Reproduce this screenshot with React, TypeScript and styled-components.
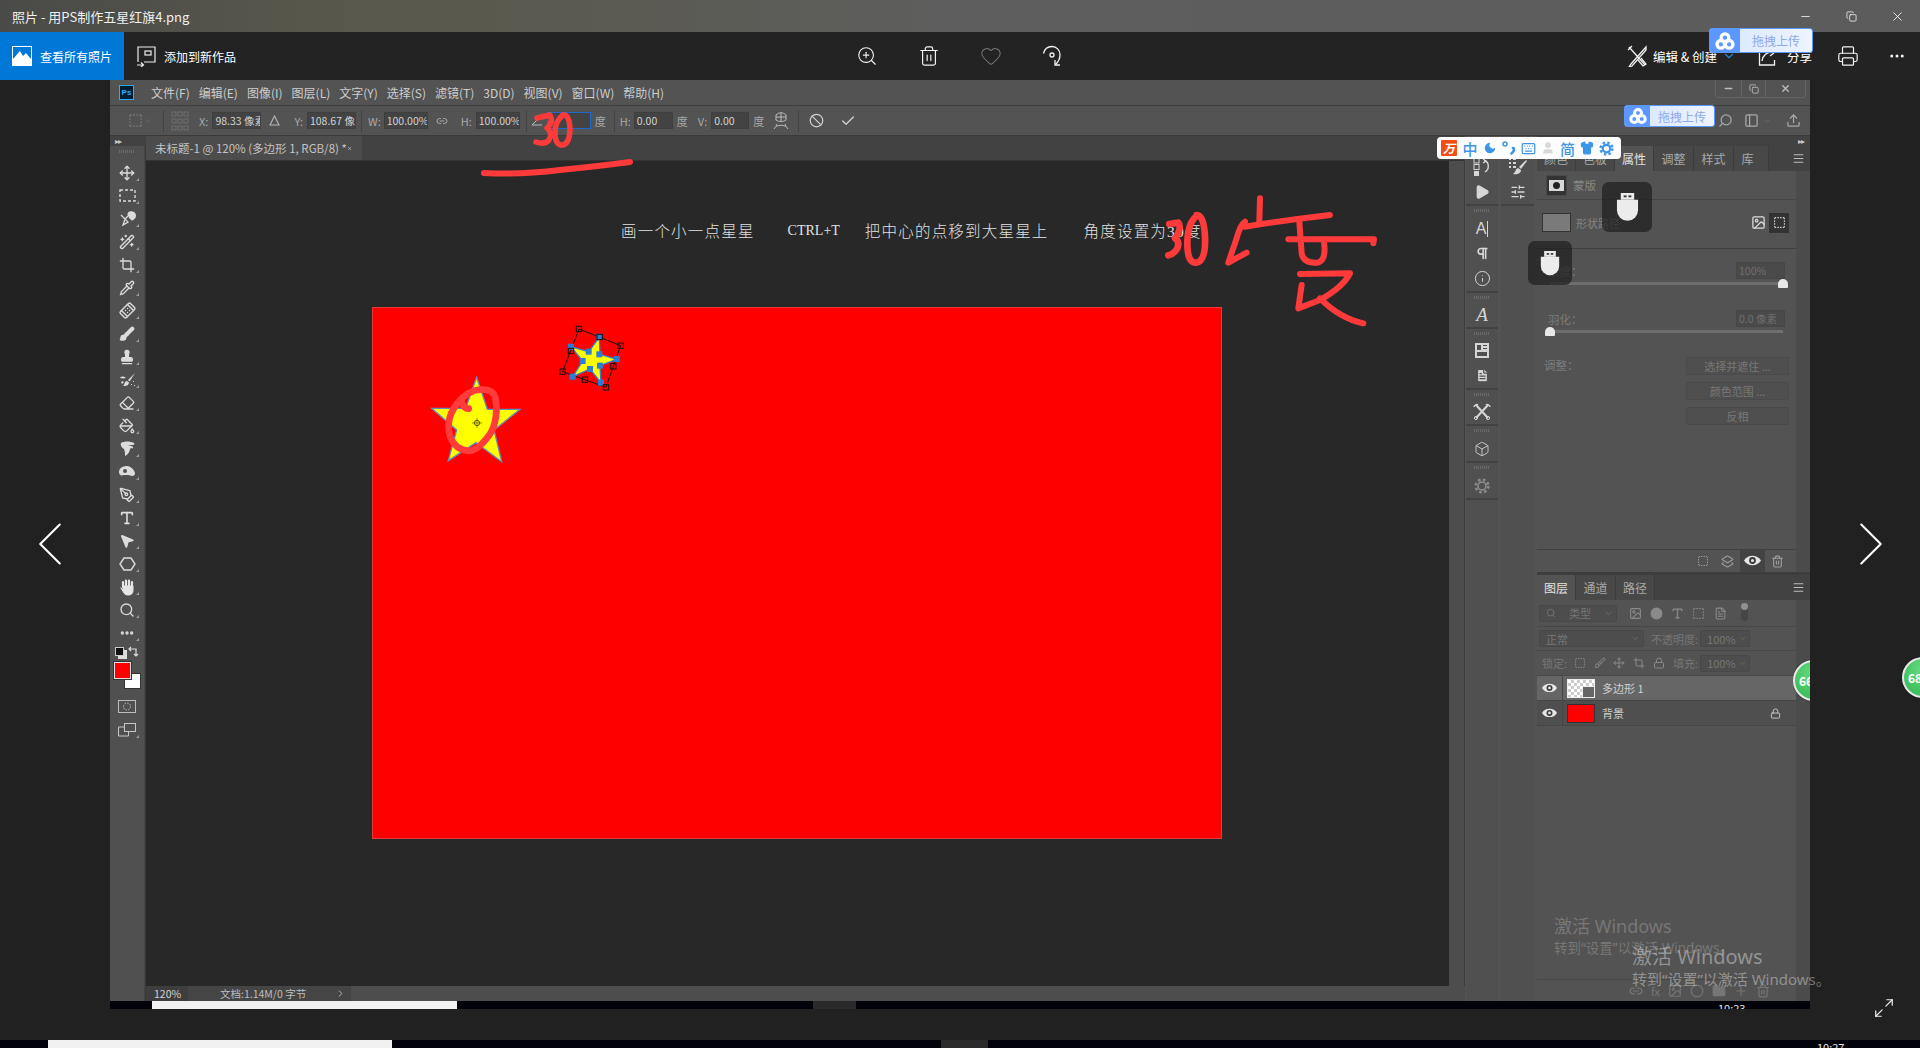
import { ReactNode } from "react";
import styled, { createGlobalStyle } from "styled-components";
import {
  Bandage,
  BoxSelect,
  Brush,
  Check,
  ChevronDown,
  ChevronLeft,
  ChevronRight,
  Crop,
  Eraser,
  FileText,
  Heart,
  Info,
  Keyboard,
  Layers2,
  Link2,
  Lock,
  Maximize2,
  Menu,
  Minus,
  MoreHorizontal,
  MousePointer2,
  Move,
  PaintBucket,
  PenTool,
  Pilcrow,
  Pipette,
  Play,
  Printer,
  Search,
  Shirt,
  SlidersHorizontal,
  Stamp,
  Trash2,
  Type,
  User,
  Wand2,
  X,
  ZoomIn,
  Ban,
  Box,
  Copy,
  Image,
  Folder,
  Plus,
  Upload,
  Circle,
  Moon,
  PanelLeft,
} from "lucide-react";

const CJK = `"Noto Sans CJK SC", "Liberation Sans", sans-serif`;

const GlobalStyle = createGlobalStyle`
  html, body {
    margin: 0;
    padding: 0;
    background: #212121;
    overflow: hidden;
  }
  * { box-sizing: border-box; }
`;

const Page = styled.div`
  position: relative;
  width: 1920px;
  height: 1048px;
  overflow: hidden;
  background: #212121;
  color: #fff;
  font-family: ${CJK};
  display: flex;
  flex-direction: column;
`;

/* ---------- Photos app chrome ---------- */

const TitleBar = styled.div`
  height: 32px;
  flex: none;
  display: flex;
  align-items: center;
  padding-left: 12px;
  font-size: 13px;
  color: #f0f0f0;
  background: linear-gradient(90deg, #4a4a48 0%, #57574c 16%, #5a5a50 28%, #5e5e5e 50%, #5c5c5c 100%);
`;

const WindowButtons = styled.div`
  margin-left: auto;
  display: flex;
  align-items: center;
`;

const WindowButton = styled.div`
  width: 46px;
  height: 32px;
  display: flex;
  align-items: center;
  justify-content: center;
  color: #fff;
`;

const CommandBar = styled.div`
  height: 48px;
  flex: none;
  background: #232323;
  display: flex;
  align-items: center;
  position: relative;
`;

const AllPhotos = styled.div`
  width: 124px;
  height: 48px;
  background: #0078d7;
  display: flex;
  align-items: center;
  gap: 8px;
  padding-left: 12px;
  font-size: 12px;
  flex: none;
`;

const AddToAlbum = styled.div`
  display: flex;
  align-items: center;
  gap: 8px;
  margin-left: 12px;
  font-size: 12px;
`;

const CommandCenter = styled.div`
  display: flex;
  align-items: center;
  gap: 40px;
  margin-left: 620px;
`;

const CommandRight = styled.div`
  display: flex;
  align-items: center;
  margin-left: auto;
  padding-right: 14px;
  font-size: 12.5px;
`;

const CommandLabel = styled.span<{ $ml?: number }>`
  margin-left: ${(p) => p.$ml ?? 6}px;
  white-space: nowrap;
`;

const CommandIcon = styled.span<{ $ml?: number }>`
  display: flex;
  margin-left: ${(p) => p.$ml ?? 0}px;
`;

const Stage = styled.div`
  height: 960px;
  flex: none;
  display: grid;
  grid-template-columns: 110px 1700px 110px;
`;

const SideColumn = styled.div<{ $right?: boolean }>`
  height: 928px;
  display: flex;
  align-items: center;
  justify-content: ${(p) => (p.$right ? "flex-end" : "flex-start")};
  padding: ${(p) => (p.$right ? "0 10px 0 0" : "0 0 0 11px")};
  color: #fff;
`;

const Photo = styled.div`
  height: 928px;
  display: flex;
  flex-direction: column;
`;

const BottomStrip = styled.div`
  height: 8px;
  flex: none;
  background: #02030a;
  display: flex;
  position: relative;
  overflow: hidden;
`;

const StripWhite = styled.div<{ $w: number; $ml: number }>`
  margin-left: ${(p) => p.$ml}px;
  width: ${(p) => p.$w}px;
  flex: none;
  background: #f1f1f1;
`;

const StripGrey = styled.div<{ $w: number; $ml: number }>`
  margin-left: ${(p) => p.$ml}px;
  width: ${(p) => p.$w}px;
  flex: none;
  background: #2a2a2a;
`;

const ClippedClock = styled.span<{ $ml: number }>`
  margin-left: ${(p) => p.$ml}px;
  font-size: 11px;
  line-height: 14px;
  color: #e8e8e8;
  white-space: nowrap;
`;

/* ---------- Photoshop: top bars ---------- */

const PsWindow = styled.div`
  height: 921px;
  flex: none;
  display: flex;
  flex-direction: column;
  background: #535353;
  color: #cfcfcf;
  font-size: 12px;
`;

const MenuBar = styled.div`
  height: 26px;
  flex: none;
  display: flex;
  align-items: center;
  background: #535353;
  border-bottom: 1px solid #3d3d3d;
  padding-left: 9px;
`;

const PsLogo = styled.div`
  width: 15px;
  height: 15px;
  background: #001e36;
  border: 1px solid #31a8ff;
  color: #31a8ff;
  font-size: 8px;
  font-weight: 700;
  line-height: 13px;
  text-align: center;
  font-family: "Liberation Sans", sans-serif;
  margin-right: 17px;
`;

const MenuItem = styled.span`
  margin-right: 9px;
  font-size: 12px;
  white-space: nowrap;
  color: #cdcdcd;
`;

const PsWindowControls = styled.div`
  margin-left: auto;
  margin-right: 4px;
  align-self: flex-start;
  height: 18px;
  display: flex;
  border: 1px solid #646464;
  border-top: 0;
  border-radius: 0 0 4px 4px;
`;

const PsControl = styled.div<{ $w: number }>`
  width: ${(p) => p.$w}px;
  display: flex;
  align-items: center;
  justify-content: center;
  color: #bdbdbd;
  border-left: 1px solid #646464;
  &:first-child { border-left: 0; }
`;

const OptionsBar = styled.div`
  height: 30px;
  flex: none;
  display: flex;
  align-items: center;
  background: #535353;
  border-bottom: 1px solid #3a3a3a;
  color: #b4b4b4;
  white-space: nowrap;
  overflow: hidden;
`;

const OptLabel = styled.span<{ $x?: number }>`
  margin-left: ${(p) => p.$x ?? 0}px;
  font-size: 11px;
  flex: none;
  color: #a8a8a8;
`;

const OptInput = styled.div<{ $w: number; $x?: number; $active?: boolean }>`
  width: ${(p) => p.$w}px;
  height: 17px;
  margin-left: ${(p) => p.$x ?? 2}px;
  flex: none;
  overflow: hidden;
  background: #434343;
  border: 1px solid ${(p) => (p.$active ? "#1f6ad0" : "#3f3f3f")};
  color: #d2d2d2;
  font-size: 10.5px;
  line-height: 15px;
  padding-left: 2px;
  white-space: nowrap;
`;

const OptIcon = styled.span<{ $x?: number }>`
  display: flex;
  flex: none;
  margin-left: ${(p) => p.$x ?? 0}px;
  color: #a9a9a9;
`;

const OptSep = styled.span<{ $x?: number }>`
  width: 1px;
  height: 22px;
  flex: none;
  background: #424242;
  margin-left: ${(p) => p.$x ?? 0}px;
`;

/* ---------- Photoshop: workspace ---------- */

const Workspace = styled.div`
  flex: 1;
  min-height: 0;
  display: flex;
`;

const ToolColumn = styled.div`
  width: 36px;
  flex: none;
  display: flex;
  flex-direction: column;
  background: #3a3a3a;
`;

const CollapseRow = styled.div`
  width: 100%;
  height: 10px;
  flex: none;
  background: #424242;
  color: #c8c8c8;
  font-size: 8px;
  line-height: 9px;
  padding-left: 5px;
  letter-spacing: -1px;
`;

const ToolRail = styled.div`
  width: 35px;
  flex: 1;
  background: #505050;
  border-right: 1px solid #454545;
  display: flex;
  flex-direction: column;
  align-items: center;
  padding-top: 4px;
`;

const Grip = styled.div`
  width: 16px;
  height: 3px;
  margin-bottom: 8px;
  flex: none;
  background: repeating-linear-gradient(90deg, #6a6a6a 0 1px, transparent 1px 2px);
`;

const ToolSlot = styled.div<{ $tick?: boolean }>`
  width: 34px;
  height: 23px;
  flex: none;
  position: relative;
  display: flex;
  align-items: center;
  justify-content: center;
  color: #dcdcdc;
  &::after {
    content: "";
    display: ${(p) => (p.$tick ? "block" : "none")};
    position: absolute;
    right: 5px;
    bottom: 3px;
    border-left: 3px solid transparent;
    border-bottom: 3px solid #9c9c9c;
  }
`;

const MiniSwatches = styled.div`
  width: 30px;
  height: 16px;
  display: flex;
  justify-content: space-between;
  align-items: center;
  padding: 0 3px 0 3px;
  color: #dcdcdc;
  margin-top: -1px;
`;

const MiniDefault = styled.span`
  width: 9px;
  height: 9px;
  background: #111;
  border: 1px solid #ccc;
  box-shadow: 3px 3px 0 #ddd;
`;

const ColorWell = styled.div`
  position: relative;
  width: 27px;
  height: 27px;
  margin: 3px 0 6px;
`;

const BackSwatch = styled.div`
  position: absolute;
  right: 0;
  bottom: 0;
  width: 17px;
  height: 16px;
  background: #fff;
  border: 1px solid #333;
`;

const FrontSwatch = styled.div`
  position: absolute;
  left: 0;
  top: 0;
  width: 17px;
  height: 17px;
  background: #f00;
  border: 1px solid #ddd;
  outline: 1px solid #333;
`;

const CenterColumn = styled.div`
  flex: 1;
  min-width: 0;
  display: flex;
  flex-direction: column;
`;

const TabBar = styled.div`
  height: 25px;
  flex: none;
  display: flex;
  background: #424242;
  border-bottom: 1px solid #333;
`;

const DocTab = styled.div`
  width: 216px;
  display: flex;
  align-items: center;
  justify-content: space-between;
  padding: 0 10px 0 9px;
  background: #4c4c4c;
  color: #c4c4c4;
  font-size: 11.5px;
  white-space: nowrap;
`;

const DocArea = styled.div`
  flex: 1;
  min-height: 0;
  display: flex;
`;

const Canvas = styled.div`
  flex: 1;
  min-width: 0;
  background: #282828;
  display: flex;
  flex-direction: column;
`;

const CanvasNote = styled.div`
  margin: 57px 0 0 475px;
  height: 24px;
  display: flex;
  align-items: center;
  white-space: nowrap;
  font-size: 15.5px;
  letter-spacing: 1.2px;
  color: #e2e2e2;
  font-weight: 300;
  font-family: "Liberation Serif", "Noto Sans CJK SC", serif;
`;

const NotePart = styled.span<{ $x?: number }>`
  margin-left: ${(p) => p.$x ?? 0}px;
`;

const NoteKeys = styled.span`
  margin: 2px 0 0 33px;
  font-size: 14px;
  letter-spacing: 0;
`;

const Flag = styled.div`
  position: relative;
  width: 850px;
  height: 532px;
  margin: 65px 0 0 226px;
  background: #f00;
  box-shadow: inset 0 0 0 1px #e23a3a;
  flex: none;
`;

const FlagArt = styled.svg`
  position: absolute;
  left: 0;
  top: 0;
`;

const DocScroll = styled.div`
  width: 16px;
  flex: none;
  background: #4d4d4d;
  border-right: 1px solid #3d3d3d;
`;

const StatusBar = styled.div`
  height: 15px;
  flex: none;
  display: flex;
  background: #4d4d4d;
  font-size: 10.5px;
  line-height: 15px;
  color: #bdbdbd;
`;

const ZoomBox = styled.div`
  width: 42px;
  background: #3e3e3e;
  padding-left: 8px;
  color: #d4d4d4;
`;

const DocInfo = styled.div`
  width: 163px;
  background: #454545;
  padding: 0 5px 0 32px;
  display: flex;
  justify-content: space-between;
  align-items: center;
`;

const DockColumn = styled.div<{ $ml?: number; $w: number }>`
  width: ${(p) => p.$w}px;
  margin-left: ${(p) => p.$ml ?? 0}px;
  flex: none;
  display: flex;
  flex-direction: column;
  padding-top: 10px;
`;

const DockGroup = styled.div<{ $h: number }>`
  height: ${(p) => p.$h}px;
  flex: none;
  background: #505050;
  border-bottom: 2px solid #424242;
  display: flex;
  flex-direction: column;
  align-items: center;
  justify-content: flex-end;
  position: relative;
  &::before {
    content: "";
    position: absolute;
    top: 3px;
    left: 8px;
    right: 8px;
    height: 3px;
    background: repeating-linear-gradient(90deg, #6a6a6a 0 1px, transparent 1px 2px);
  }
`;

const DockFill = styled.div`
  flex: 1;
  background: #505050;
`;

const DockIcon = styled.div`
  height: 25px;
  display: flex;
  align-items: center;
  justify-content: center;
  color: #d6d6d6;
  flex: none;
`;

const DockScript = styled.span`
  font-family: "Liberation Serif", serif;
  font-style: italic;
  font-size: 19px;
  color: #d6d6d6;
`;

const DockLetter = styled.span`
  font-family: "Liberation Sans", sans-serif;
  font-size: 16px;
  color: #d6d6d6;
  border-right: 1px solid #d6d6d6;
  padding-right: 1px;
  line-height: 16px;
`;

const PanelColumn = styled.div`
  width: 273px;
  margin-left: 3px;
  flex: none;
  display: flex;
  flex-direction: column;
  background: #3d3d3d;
`;

const PanelTop = styled.div`
  height: 10px;
  flex: none;
  background: #424242;
  color: #c8c8c8;
  font-size: 8px;
  line-height: 9px;
  text-align: right;
  padding-right: 6px;
  letter-spacing: -1px;
`;

const PanelTabs = styled.div`
  height: 25px;
  flex: none;
  display: flex;
  align-items: stretch;
  background: #424242;
  position: relative;
`;

const PanelTab = styled.div<{ $w: number; $active?: boolean; $pr?: number }>`
  width: ${(p) => p.$w}px;
  flex: none;
  display: flex;
  align-items: center;
  justify-content: center;
  padding-right: ${(p) => p.$pr ?? 0}px;
  font-size: 12px;
  color: ${(p) => (p.$active ? "#e2e2e2" : "#a8a8a8")};
  background: ${(p) => (p.$active ? "#535353" : "#484848")};
  border-right: 1px solid #3c3c3c;
`;

const PanelMenu = styled.div`
  margin-left: auto;
  width: 24px;
  display: flex;
  align-items: center;
  justify-content: center;
  color: #bdbdbd;
`;

const Properties = styled.div`
  height: 436px;
  flex: none;
  display: flex;
  flex-direction: column;
`;

const PanelBody = styled.div`
  flex: 1;
  min-height: 0;
  display: flex;
  background: #4b4b4b;
`;

const PanelInner = styled.div`
  width: 259px;
  flex: none;
  background: #535353;
  display: flex;
  flex-direction: column;
`;

const MaskRow = styled.div`
  height: 29px;
  flex: none;
  display: flex;
  align-items: center;
  gap: 6px;
  padding-left: 9px;
  border-bottom: 1px solid #454545;
  color: #888;
  font-size: 11.5px;
`;

const MaskIcon = styled.div`
  width: 21px;
  height: 21px;
  background: #333;
  border: 1px solid #484848;
  display: flex;
  align-items: center;
  justify-content: center;
`;

const MaskWhite = styled.div`
  width: 15px;
  height: 11px;
  background: #d8d8d8;
  display: flex;
  align-items: center;
  justify-content: center;
  &::after {
    content: "";
    width: 7px;
    height: 7px;
    border-radius: 50%;
    background: #222;
  }
`;

const ShapeRow = styled.div`
  height: 49px;
  flex: none;
  display: flex;
  align-items: center;
  gap: 5px;
  padding: 0 7px 3px 5px;
  border-bottom: 1px solid #3f3f3f;
  color: #858585;
  font-size: 11px;
`;

const ShapeThumb = styled.div`
  width: 29px;
  height: 19px;
  background: #7a7a7a;
  border: 1px solid #333;
`;

const ShapeTools = styled.div`
  margin-left: auto;
  display: flex;
  align-items: center;
  gap: 3px;
  color: #ddd;
`;

const ShapeToolBox = styled.div`
  width: 20px;
  height: 20px;
  background: #333;
  display: flex;
  align-items: center;
  justify-content: center;
`;

const SliderBlock = styled.div<{ $mt: number }>`
  margin: ${(p) => p.$mt}px 11px 0 11px;
  flex: none;
`;

const SliderHead = styled.div`
  display: flex;
  align-items: center;
  justify-content: space-between;
  height: 17px;
  color: #7c7c7c;
  font-size: 11.5px;
`;

const ValueBox = styled.div`
  width: 49px;
  height: 17px;
  background: #4a4a4a;
  border: 1px solid #464646;
  color: #707070;
  font-size: 10.5px;
  line-height: 15px;
  padding-left: 2px;
  overflow: hidden;
  white-space: nowrap;
`;

const SliderTrack = styled.div<{ $at: number }>`
  position: relative;
  height: 3px;
  margin: 3px 2px 0 2px;
  background: #6e6e6e;
  &::after {
    content: "";
    position: absolute;
    left: ${(p) => p.$at}%;
    top: -3px;
    margin-left: -5px;
    width: 10px;
    height: 9px;
    background: #e8e8e8;
    border-radius: 5px 5px 1px 1px;
  }
`;

const AdjustRow = styled.div`
  margin: 24px 7px 0 7px;
  display: flex;
  justify-content: space-between;
  flex: none;
  color: #7c7c7c;
  font-size: 11.5px;
`;

const AdjustButtons = styled.div`
  display: flex;
  flex-direction: column;
  gap: 7px;
`;

const AdjustButton = styled.div`
  width: 103px;
  height: 18px;
  border: 1px solid #4a4a4a;
  border-radius: 2px;
  background: #4f4f4f;
  color: #787878;
  font-size: 11px;
  line-height: 16px;
  text-align: center;
`;

const ActionBar = styled.div`
  height: 23px;
  flex: none;
  margin-top: auto;
  display: flex;
  align-items: stretch;
  justify-content: flex-end;
  padding-right: 6px;
  border-top: 1px solid #414141;
  background: #535353;
`;

const ActionItem = styled.div<{ $active?: boolean; $dim?: boolean }>`
  width: 25px;
  display: flex;
  align-items: center;
  justify-content: center;
  color: ${(p) => (p.$dim ? "#a0a0a0" : "#dedede")};
  background: ${(p) => (p.$active ? "#434343" : "transparent")};
`;

const PanelGap = styled.div`
  height: 3px;
  flex: none;
`;

const Layers = styled.div`
  flex: 1;
  min-height: 0;
  display: flex;
  flex-direction: column;
`;

const FilterRow = styled.div<{ $h: number }>`
  height: ${(p) => p.$h}px;
  flex: none;
  display: flex;
  align-items: center;
  padding-left: 2px;
  color: #8a8a8a;
  border-bottom: 1px solid #484848;
`;

const FieldBox = styled.div<{ $w: number; $x?: number }>`
  width: ${(p) => p.$w}px;
  height: 17px;
  margin-left: ${(p) => p.$x ?? 0}px;
  flex: none;
  display: flex;
  align-items: center;
  justify-content: space-between;
  gap: 3px;
  padding: 0 3px 0 6px;
  background: #4d4d4d;
  border: 1px solid #484848;
  border-radius: 2px;
  color: #767676;
  font-size: 11px;
  white-space: nowrap;
`;

const FilterIcon = styled.span<{ $x: number }>`
  display: flex;
  margin-left: ${(p) => p.$x}px;
  flex: none;
`;

const FilterToggle = styled.span`
  width: 7px;
  height: 15px;
  margin-left: 14px;
  border-radius: 4px;
  background: #464646;
  position: relative;
  &::after {
    content: "";
    position: absolute;
    left: 0;
    top: -3px;
    width: 7px;
    height: 7px;
    border-radius: 50%;
    background: #909090;
  }
`;

const DimLabel = styled.span<{ $x?: number }>`
  margin-left: ${(p) => p.$x ?? 0}px;
  font-size: 11px;
  color: #767676;
  flex: none;
`;

const LayerRow = styled.div<{ $selected?: boolean }>`
  height: 25px;
  flex: none;
  display: flex;
  align-items: center;
  background: ${(p) => (p.$selected ? "#666" : "#4f4f4f")};
  border-bottom: 1px solid #464646;
  color: #d0d0d0;
  font-size: 11px;
`;

const EyeCell = styled.div`
  width: 26px;
  height: 100%;
  flex: none;
  display: flex;
  align-items: center;
  justify-content: center;
  border-right: 1px solid #464646;
`;

const LayerThumb = styled.div<{ $red?: boolean }>`
  width: 28px;
  height: 19px;
  margin: 0 7px 0 4px;
  flex: none;
  border: 1px solid ${(p) => (p.$red ? "#333" : "#eee")};
  background-color: ${(p) => (p.$red ? "#f00" : "#fff")};
  background-image: ${(p) =>
    p.$red
      ? "none"
      : "linear-gradient(45deg, #ccc 25%, transparent 25%, transparent 75%, #ccc 75%), linear-gradient(45deg, #ccc 25%, transparent 25%, transparent 75%, #ccc 75%)"};
  background-size: 6px 6px;
  background-position: 0 0, 3px 3px;
  position: relative;
`;

const ThumbBadge = styled.div`
  position: absolute;
  right: -1px;
  bottom: -1px;
  width: 13px;
  height: 12px;
  background: #666;
  border: 1px solid #eee;
`;

const LayerLock = styled.span`
  margin-left: auto;
  margin-right: 15px;
  display: flex;
  color: #ccc;
`;

const LayersFooter = styled.div`
  height: 22px;
  flex: none;
  margin-top: auto;
  border-top: 1px solid #474747;
  display: flex;
  align-items: center;
  gap: 8px;
  padding-left: 92px;
  color: #767676;
`;

/* ---------- things lying over the photo ---------- */

const UploadBadge = styled.div<{ $x: number; $y: number; $w: number; $h: number }>`
  position: absolute;
  left: ${(p) => p.$x}px;
  top: ${(p) => p.$y}px;
  width: ${(p) => p.$w}px;
  height: ${(p) => p.$h}px;
  display: flex;
  border: 1px solid #5b97ff;
  border-radius: 3px;
  overflow: hidden;
  background: linear-gradient(90deg, #d6e5ff, #eef4ff);
`;

const UploadLogo = styled.div<{ $w: number }>`
  width: ${(p) => p.$w}px;
  flex: none;
  background: #5b97ff;
  display: flex;
  align-items: center;
  justify-content: center;
`;

const UploadText = styled.div`
  flex: 1;
  display: flex;
  align-items: center;
  justify-content: center;
  font-size: 12px;
  color: #8ea9ee;
  white-space: nowrap;
`;

const ImeBar = styled.div`
  position: absolute;
  left: 1437px;
  top: 137px;
  width: 184px;
  height: 22px;
  background: #fdfdfd;
  border-radius: 4px;
  display: flex;
  align-items: center;
  gap: 3.5px;
  padding-left: 4px;
  color: #3d95e8;
`;

const ImeLogo = styled.div`
  width: 16px;
  height: 16px;
  margin-right: 1.5px;
  background: #f04e14;
  border-radius: 1px;
  display: flex;
  align-items: center;
  justify-content: center;
  color: #fff;
  font-size: 12px;
  font-weight: 700;
  line-height: 1;
  font-style: italic;
  flex: none;
`;

const ImeItem = styled.div`
  width: 16px;
  height: 16px;
  flex: none;
  display: flex;
  align-items: center;
  justify-content: center;
  font-size: 15px;
  line-height: 1;
  font-weight: 500;
`;

const UsbTile = styled.div<{ $x: number; $y: number; $s: number }>`
  position: absolute;
  left: ${(p) => p.$x}px;
  top: ${(p) => p.$y}px;
  width: ${(p) => p.$s}px;
  height: ${(p) => p.$s}px;
  border-radius: 7px;
  background: rgba(30, 30, 30, 0.72);
  display: flex;
  align-items: center;
  justify-content: center;
`;

const SpeedBall = styled.div<{ $y: number }>`
  position: absolute;
  left: 0;
  top: ${(p) => p.$y}px;
  width: 41px;
  height: 41px;
  border-radius: 50%;
  border: 2px solid #e8e8e8;
  background: radial-gradient(circle at 50% 30%, #66dc80, #3fc05f 70%);
  color: #fff;
  font-size: 12px;
  font-weight: 700;
  line-height: 37px;
  padding-left: 4px;
  box-shadow: 0 0 2px rgba(0, 0, 0, 0.6);
`;

const BallClip = styled.div<{ $x: number; $w: number }>`
  position: absolute;
  left: ${(p) => p.$x}px;
  top: 650px;
  width: ${(p) => p.$w}px;
  height: 60px;
  overflow: hidden;
`;

const Activation = styled.div<{ $x: number; $y: number; $alpha: number; $big: number; $small: number }>`
  position: absolute;
  left: ${(p) => p.$x}px;
  top: ${(p) => p.$y}px;
  color: rgba(255, 255, 255, ${(p) => p.$alpha});
  font-size: ${(p) => p.$big}px;
  line-height: 26px;
  white-space: nowrap;
  font-family: "Noto Sans", ${CJK};
  small {
    display: block;
    font-size: ${(p) => p.$small}px;
    line-height: 18px;
  }
`;

const Annotations = styled.svg`
  position: absolute;
  left: 0;
  top: 0;
  pointer-events: none;
`;

const ExpandButton = styled.div`
  position: absolute;
  left: 1873px;
  top: 997px;
  color: #eee;
`;

/* ---------- small drawings ---------- */

function BaiduMark({ size }: { size: number }) {
  return (
    <svg width={size} height={size} viewBox="0 0 24 24" fill="none" stroke="#fff" strokeWidth="4">
      <circle cx="12" cy="8" r="4.6" />
      <circle cx="7" cy="16" r="4.6" />
      <circle cx="17" cy="16" r="4.6" />
    </svg>
  );
}

function UsbIcon({ w }: { w: number }) {
  return (
    <svg width={w} height={w * 1.25} viewBox="0 0 24 30" fill="#ececec">
      <path d="M5 0h14v7H5z" />
      <path d="M1 7h22v11a11 11 0 0 1-22 0z" />
      <rect x="8" y="2.5" width="3" height="2" fill="#333" />
      <rect x="13" y="2.5" width="3" height="2" fill="#333" />
    </svg>
  );
}

function RotateIcon() {
  return (
    <svg width="20" height="22" viewBox="0 0 20 22" fill="none" stroke="#f2f2f2" strokeWidth="1.3">
      <path d="M1.5 8.5C2.5 4 6 1.5 10 1.5c4.5 0 8 3.6 8 8.2 0 4-1.6 7-4.5 9.8" />
      <path d="M13 15v5h5" />
      <circle cx="10" cy="10" r="2" />
    </svg>
  );
}

function PhotosIcon() {
  return (
    <svg width="20" height="20" viewBox="0 0 20 20">
      <rect width="20" height="20" fill="#fff" />
      <path d="M1 1h18v12l-5-6-3 3-3-5-7 8z" fill="#0078d7" />
    </svg>
  );
}

function AlbumIcon() {
  return (
    <svg width="20" height="22" viewBox="0 0 20 22" fill="none" stroke="#eee" strokeWidth="1.2">
      <path d="M2 17V2h17v15H8" />
      <rect x="9" y="6" width="6" height="4" />
      <path d="M1 20h6M5 17.5 7.5 20 5 22" />
    </svg>
  );
}

function EditCreateIcon() {
  return (
    <svg width="20" height="22" viewBox="0 0 20 22" fill="none" stroke="#f2f2f2" strokeWidth="1.3">
      <path d="M2 2 18 20M5 1 1 5M19 2 4 19l-2 3 3-1L19 5z" />
      <path d="M11 15l5 6 3-2-5-6" />
    </svg>
  );
}

function ShareIcon() {
  return (
    <svg width="20" height="20" viewBox="0 0 20 20" fill="none" stroke="#f2f2f2" strokeWidth="1.3">
      <path d="M1.5 4v15h15v-5" />
      <path d="M4 15c1-6 5-9 11-9M12 1.5l5 4.5-5 4" />
    </svg>
  );
}

function WarpIcon() {
  return (
    <svg width="16" height="20" viewBox="0 0 16 20" fill="none" stroke="#bdbdbd" strokeWidth="1">
      <path d="M3 4c3-3 7-3 10 0v5c-3 2-7 2-10 0zM8 2v9M3 6h10" />
      <path d="M1 18c2-5 12-5 14 0M4 13l-1 2M12 13l1 2" />
    </svg>
  );
}

function GridIcon() {
  return (
    <svg width="18" height="20" viewBox="0 0 18 20" fill="none" stroke="#6e6e6e" strokeWidth="1">
      {[1, 7, 13].map((x) =>
        [1, 8, 15].map((y) => <rect key={`${x}-${y}`} x={x} y={y} width="4" height="4" />)
      )}
    </svg>
  );
}

function DeltaIcon() {
  return (
    <svg width="11" height="11" viewBox="0 0 11 11" fill="none" stroke="#b8b8b8" strokeWidth="1.1">
      <path d="M5.5 1 10 10H1z" />
    </svg>
  );
}

function AngleIcon() {
  return (
    <svg width="12" height="10" viewBox="0 0 12 10" fill="none" stroke="#b8b8b8" strokeWidth="1">
      <path d="M1 9h10M1 9l8-8" />
    </svg>
  );
}

function HistoryIcon() {
  return (
    <svg width="20" height="20" viewBox="0 0 20 20" fill="#d6d6d6">
      <rect x="2" y="1" width="5" height="5" fill="none" stroke="#d6d6d6" />
      <rect x="2" y="7.5" width="5" height="5" fill="none" stroke="#d6d6d6" />
      <rect x="2" y="14" width="5" height="5" />
      <path d="M11 2l3 2-3 2M12 4c5 0 6 8 1 11" fill="none" stroke="#d6d6d6" strokeWidth="1.4" />
    </svg>
  );
}

function BrushPresetIcon() {
  return (
    <svg width="20" height="20" viewBox="0 0 20 20" fill="#d6d6d6">
      <path d="M1 1h2v2H1zM5 1h3v2H5zM1 5h2v2H1zM5 5h3v2H5zM1 9h2v2H1zM5 9h3v2H5z" />
      <path d="M18 3 11 10l2 2 6-8zM10 11c-3 1-2 4-5 6 3 1 8 0 8-4z" />
    </svg>
  );
}

function EyeIcon({ size = 17 }: { size?: number }) {
  return (
    <svg width={size} height={size * 0.65} viewBox="0 0 20 13">
      <path d="M0 6.5C4-1 16-1 20 6.5 16 14 4 14 0 6.5z" fill="#e6e6e6" />
      <circle cx="10" cy="6.5" r="4" fill="#3c3c3c" />
      <circle cx="10" cy="6.5" r="1.8" fill="#e6e6e6" />
    </svg>
  );
}

function MarqueeIcon() {
  return (
    <svg width="17" height="13" viewBox="0 0 17 13" fill="none" stroke="#dcdcdc" strokeWidth="1.4" strokeDasharray="3 2">
      <rect x="1" y="1" width="15" height="11" />
    </svg>
  );
}

function LassoIcon() {
  return (
    <svg width="17" height="17" viewBox="0 0 17 17" fill="none" stroke="#dcdcdc" strokeWidth="1.3">
      <path d="M2 5l7 7-5 3 2-6 4-4" />
      <path d="M9 5c0-4 6-4 7-1 1 3-1 5-3 6l-3-3" fill="#dcdcdc" />
    </svg>
  );
}

function HistoryBrushIcon() {
  return (
    <svg width="17" height="16" viewBox="0 0 17 16" fill="#dcdcdc">
      <path d="M16 1 9 8l1.6 1.6zM8 9c-3 .5-2 3.5-4 5 3 .5 6-.5 6-3.4z" />
      <path d="M1 6c1-2 4-2 6 0-2 .6-4 .6-6 0zM2 10c1-1 2-1 3 0l-2 2z" />
      <path d="M12 12h1v1h-1zM14 9h1v1h-1zM15 13h1v1h-1z" />
    </svg>
  );
}

function SmudgeIcon() {
  return (
    <svg width="17" height="17" viewBox="0 0 17 17" fill="#dcdcdc">
      <path d="M2 3c3-2 9-2 13 0 1 1 0 2-1 2H9c2 .5 4 1 5 2 .5 1-.5 2-2 1l-1 1c0 2-2 6-5 7 0-2 0-5-1-7C3 8 1 5 2 3z" />
    </svg>
  );
}

function DodgeIcon() {
  return (
    <svg width="18" height="14" viewBox="0 0 18 14" fill="#dcdcdc">
      <path d="M1 7c0-4 4-6 8-6 3 0 7 3 8 7 0 2-1 3-3 3-1 0-2-1-4-1H6C3 11 1 10 1 7z" />
      <circle cx="7" cy="6" r="2" fill="#505050" />
    </svg>
  );
}

function HandIcon() {
  return (
    <svg width="17" height="18" viewBox="0 0 17 18" fill="none" stroke="#e6e6e6" strokeLinecap="round" strokeWidth="2.2">
      <path d="M4 9V4M7 8V2.5M10 8V2.5M13 9V4" />
      <path d="M2 10l3 5c1 1.5 2 2 4 2 3 0 5-1 5-5V8H4v4z" fill="#e6e6e6" strokeWidth="1" />
    </svg>
  );
}

function ShapeHexIcon() {
  return (
    <svg width="17" height="14" viewBox="0 0 17 14" fill="none" stroke="#dcdcdc" strokeWidth="1.4">
      <path d="M5 1h7l4 6-4 6H5L1 7z" />
    </svg>
  );
}

function QuickMaskIcon() {
  return (
    <svg width="18" height="13" viewBox="0 0 18 13" fill="none" stroke="#bdbdbd">
      <rect x="0.5" y="0.5" width="17" height="12" />
      <circle cx="9" cy="6.5" r="3.5" strokeDasharray="1.5 1.2" />
    </svg>
  );
}

function ScreenModeIcon() {
  return (
    <svg width="18" height="14" viewBox="0 0 18 14" fill="none" stroke="#c6c6c6">
      <rect x="6.5" y="0.5" width="11" height="8" />
      <path d="M6 4H0.5v9h10V9" />
    </svg>
  );
}

function SwapIcon() {
  return (
    <svg width="11" height="11" viewBox="0 0 11 11" fill="none" stroke="#dcdcdc" strokeWidth="1.2">
      <path d="M1 3h7v7M3 1 1 3l2 2M6 8l2 2 2-2" />
    </svg>
  );
}

function ToolsCrossIcon() {
  return (
    <svg width="18" height="18" viewBox="0 0 18 18" fill="none" stroke="#d6d6d6" strokeWidth="2">
      <path d="M3 2l12 13M15 2 3 15" />
      <circle cx="15" cy="15" r="1.6" strokeWidth="1" />
      <circle cx="3" cy="15" r="1.6" strokeWidth="1" />
      <path d="M1 4c0-2 3-3 4-2M17 4c0-2-3-3-4-2" strokeWidth="1.4" />
    </svg>
  );
}

function RingGearIcon({ size, color, thick }: { size: number; color: string; thick: number }) {
  return (
    <svg width={size} height={size} viewBox="0 0 20 20" fill="none" stroke={color}>
      <circle cx="10" cy="10" r="5" strokeWidth={thick} />
      <circle cx="10" cy="10" r="8" strokeWidth="3" strokeDasharray="3.3 3" />
    </svg>
  );
}

function PunctuationIcon() {
  return (
    <svg width="16" height="16" viewBox="0 0 16 16" fill="none" stroke="#3d95e8" strokeWidth="1.5">
      <circle cx="4" cy="4" r="2" />
      <path d="M12 8c1.6 0 1.6 3-1.5 5.5" strokeWidth="2.6" strokeLinecap="round" />
    </svg>
  );
}

function PanelFormIcon() {
  return (
    <svg width="16" height="17" viewBox="0 0 16 17" fill="#d6d6d6">
      <path d="M1 1h14v15H1z" />
      <path d="M3 3h4v5H3zM9 3h4v1H9zM9 6h4v1H9zM3 10h10v4H3z" fill="#505050" />
    </svg>
  );
}

function StarArt() {
  const handles = [
    [598, 110], [650, 177], [603, 248], [518, 230], [513, 140],
    [566, 155], [598, 163], [600, 197], [570, 207], [548, 183],
  ];
  const boxHandles = [
    [537, 87], [662, 137], [618, 262], [488, 215], [513, 153], [640, 199], [555, 239], [599, 111],
  ];
  return (
    <FlagArt width="850" height="532" viewBox="0 0 850 532">
      <g transform="translate(28 -7) scale(0.33333)">
        <polygon
          points="230,232 262,328 360,328 282,390 305,485 228,428 145,482 170,390 95,325 197,325"
          fill="#ffff00"
          stroke="#5f8fc0"
          strokeWidth="4"
        />
        <path
          d="M206 326C192 326 186 315 185 302M146 385C143 340 172 302 205 280C232 264 278 262 286 292C294 330 288 375 268 405C248 432 222 458 200 452C168 448 148 420 146 385"
          fill="none"
          stroke="#ff3b3b"
          strokeWidth="20"
          strokeLinecap="round"
        />
        <circle cx="231" cy="369" r="8" fill="none" stroke="#5a5a00" strokeWidth="3" />
        <path d="M216 369h30M231 354v30" stroke="#5a5a00" strokeWidth="2" />
        <polygon
          points="598,112 600,163 650,178 600,197 603,248 570,207 518,230 548,183 513,140 566,155"
          fill="#ffff00"
          stroke="#2f80d8"
          strokeWidth="4"
        />
        <polygon points="537,87 662,137 618,262 488,215" fill="none" stroke="#111" strokeWidth="3" />
        {handles.map(([x, y]) => (
          <rect key={`${x}-${y}`} x={x - 9} y={y - 9} width="18" height="18" fill="#2a7fd4" />
        ))}
        {boxHandles.map(([x, y]) => (
          <rect
            key={`b${x}-${y}`}
            x={x - 8}
            y={y - 8}
            width="16"
            height="16"
            fill="none"
            stroke="#111"
            strokeWidth="3"
          />
        ))}
      </g>
    </FlagArt>
  );
}

function InkStrokes() {
  const ink = { fill: "none", stroke: "#ff3a3a", strokeLinecap: "round", strokeLinejoin: "round" } as const;
  return (
    <Annotations width="1920" height="1048" viewBox="0 0 1920 1048">
      <g {...ink} strokeWidth="5.5">
        <path d="M537 118L550 115Q554 122 547 128Q553 133 549 140Q545 145 536 142" />
        <path d="M563 115Q554 122 555 135Q556 146 563 145Q570 143 570 128Q569 114 563 115" />
        <path d="M484 173Q520 175 560 170Q600 166 630 162" strokeWidth="6" />
      </g>
      <g {...ink} strokeWidth="18" transform="translate(1100 180) scale(0.33333)">
        <path d="M208 132L235 128Q245 140 232 165L225 175Q240 185 232 205Q222 222 205 226" strokeWidth="20" />
        <path d="M290 108Q262 130 262 190Q262 250 288 248Q318 245 315 170Q312 105 290 105" strokeWidth="20" />
        <path d="M480 55L478 125" />
        <path d="M435 125Q420 135 410 175L385 248L440 218" />
        <path d="M435 140Q560 120 690 105" />
        <path d="M565 178L822 178L820 190" />
        <path d="M598 125L605 220Q610 250 650 248Q680 245 672 185" />
        <path d="M600 282L750 280Q730 320 660 360L595 385L605 315" />
        <path d="M660 355Q720 415 790 430" />
      </g>
    </Annotations>
  );
}

/* ---------- data ---------- */

const MENU = ["文件(F)", "编辑(E)", "图像(I)", "图层(L)", "文字(Y)", "选择(S)", "滤镜(T)", "3D(D)", "视图(V)", "窗口(W)", "帮助(H)"];

const TOOLS: { key: string; icon: ReactNode }[] = [
  { key: "move", icon: <Move size={16} /> },
  { key: "marquee", icon: <MarqueeIcon /> },
  { key: "lasso", icon: <LassoIcon /> },
  { key: "wand", icon: <Wand2 size={16} /> },
  { key: "crop", icon: <Crop size={16} /> },
  { key: "pipette", icon: <Pipette size={16} /> },
  { key: "heal", icon: <Bandage size={17} style={{ transform: "rotate(-45deg)" }} /> },
  { key: "brush", icon: <Brush size={16} fill="#dcdcdc" /> },
  { key: "stamp", icon: <Stamp size={16} fill="#dcdcdc" /> },
  { key: "history", icon: <HistoryBrushIcon /> },
  { key: "eraser", icon: <Eraser size={16} /> },
  { key: "bucket", icon: <PaintBucket size={16} /> },
  { key: "smudge", icon: <SmudgeIcon /> },
  { key: "dodge", icon: <DodgeIcon /> },
  { key: "pen", icon: <PenTool size={16} /> },
  { key: "type", icon: <Type size={16} strokeWidth={2.4} /> },
  { key: "path", icon: <MousePointer2 size={16} fill="#dcdcdc" /> },
  { key: "shape", icon: <ShapeHexIcon /> },
  { key: "hand", icon: <HandIcon /> },
  { key: "zoom", icon: <Search size={16} /> },
  { key: "more", icon: <MoreHorizontal size={16} strokeWidth={3} /> },
];

export default function App() {
  return (
    <>
      <GlobalStyle />
      <Page>
        <TitleBar>
          照片 - 用PS制作五星红旗4.png
          <WindowButtons>
            <WindowButton>
              <Minus size={13} strokeWidth={1.4} />
            </WindowButton>
            <WindowButton>
              <Copy size={11} strokeWidth={1.6} />
            </WindowButton>
            <WindowButton>
              <X size={15} strokeWidth={1.3} />
            </WindowButton>
          </WindowButtons>
        </TitleBar>

        <CommandBar>
          <AllPhotos>
            <PhotosIcon />
            查看所有照片
          </AllPhotos>
          <AddToAlbum>
            <AlbumIcon />
            添加到新作品
          </AddToAlbum>
          <CommandCenter>
            <ZoomIn size={22} strokeWidth={1.2} color="#f2f2f2" />
            <Trash2 size={22} strokeWidth={1.3} color="#f2f2f2" />
            <Heart size={22} strokeWidth={1.1} color="#777" />
            <RotateIcon />
          </CommandCenter>
          <CommandRight>
            <EditCreateIcon />
            <CommandLabel>编辑 &amp; 创建</CommandLabel>
            <CommandIcon $ml={5}>
              <ChevronDown size={14} color="#2b84d8" />
            </CommandIcon>
            <CommandIcon $ml={22}>
              <ShareIcon />
            </CommandIcon>
            <CommandLabel $ml={9}>分享</CommandLabel>
            <CommandIcon $ml={25}>
              <Printer size={22} strokeWidth={1.3} color="#f2f2f2" />
            </CommandIcon>
            <CommandIcon $ml={29}>
              <MoreHorizontal size={18} color="#f2f2f2" />
            </CommandIcon>
          </CommandRight>
        </CommandBar>

        <Stage>
          <SideColumn>
            <ChevronLeft size={78} strokeWidth={0.65} />
          </SideColumn>

          <Photo>
            <PsWindow>
              <MenuBar>
                <PsLogo>Ps</PsLogo>
                {MENU.map((m) => (
                  <MenuItem key={m}>{m}</MenuItem>
                ))}
                <PsWindowControls>
                  <PsControl $w={25}>
                    <Minus size={11} strokeWidth={3} />
                  </PsControl>
                  <PsControl $w={24}>
                    <Copy size={10} strokeWidth={2} />
                  </PsControl>
                  <PsControl $w={40}>
                    <X size={11} strokeWidth={3} />
                  </PsControl>
                </PsWindowControls>
              </MenuBar>

              <OptionsBar>
                <OptIcon $x={18}>
                  <BoxSelect size={15} color="#7c7c7c" />
                </OptIcon>
                <OptIcon $x={0}>
                  <ChevronDown size={10} color="#6c6c6c" />
                </OptIcon>
                <OptSep $x={10} />
                <OptIcon $x={7}>
                  <GridIcon />
                </OptIcon>
                <OptLabel $x={10}>X:</OptLabel>
                <OptInput $w={49} $x={4}>98.33 像素</OptInput>
                <OptIcon $x={8}>
                  <DeltaIcon />
                </OptIcon>
                <OptLabel $x={14}>Y:</OptLabel>
                <OptInput $w={49} $x={4}>108.67 像素</OptInput>
                <OptSep $x={5} />
                <OptLabel $x={6}>W:</OptLabel>
                <OptInput $w={44} $x={3}>100.00%</OptInput>
                <OptIcon $x={8}>
                  <Link2 size={12} />
                </OptIcon>
                <OptLabel $x={13}>H:</OptLabel>
                <OptInput $w={44} $x={4}>100.00%</OptInput>
                <OptSep $x={6} />
                <OptIcon $x={4}>
                  <AngleIcon />
                </OptIcon>
                <OptInput $w={44} $x={4} $active />
                <OptLabel $x={4}>度</OptLabel>
                <OptSep $x={8} />
                <OptLabel $x={5}>H:</OptLabel>
                <OptInput $w={39} $x={3}>0.00</OptInput>
                <OptLabel $x={4}>度</OptLabel>
                <OptLabel $x={10}>V:</OptLabel>
                <OptInput $w={38} $x={4}>0.00</OptInput>
                <OptLabel $x={4}>度</OptLabel>
                <OptIcon $x={9}>
                  <WarpIcon />
                </OptIcon>
                <OptSep $x={9} />
                <OptIcon $x={10}>
                  <Ban size={15} color="#d0d0d0" />
                </OptIcon>
                <OptIcon $x={16}>
                  <Check size={16} color="#d0d0d0" />
                </OptIcon>
                <OptIcon $x={862}>
                  <Search size={15} style={{ transform: "scaleX(-1)" }} />
                </OptIcon>
                <OptIcon $x={11}>
                  <PanelLeft size={15} />
                </OptIcon>
                <OptIcon $x={3}>
                  <ChevronDown size={10} color="#6c6c6c" />
                </OptIcon>
                <OptIcon $x={14}>
                  <Upload size={15} />
                </OptIcon>
              </OptionsBar>

              <Workspace>
                <ToolColumn>
                  <CollapseRow>▸▸</CollapseRow>
                  <ToolRail>
                    <Grip />
                    {TOOLS.map((t) => (
                      <ToolSlot key={t.key} $tick>
                        {t.icon}
                      </ToolSlot>
                    ))}
                    <MiniSwatches>
                      <MiniDefault />
                      <SwapIcon />
                    </MiniSwatches>
                    <ColorWell>
                      <BackSwatch />
                      <FrontSwatch />
                    </ColorWell>
                    <ToolSlot>
                      <QuickMaskIcon />
                    </ToolSlot>
                    <ToolSlot $tick>
                      <ScreenModeIcon />
                    </ToolSlot>
                  </ToolRail>
                </ToolColumn>

                <CenterColumn>
                  <TabBar>
                    <DocTab>
                      未标题-1 @ 120% (多边形 1, RGB/8) *
                      <X size={9} strokeWidth={3} />
                    </DocTab>
                  </TabBar>
                  <DocArea>
                    <Canvas>
                      <CanvasNote>
                        <NotePart>画一个小一点星星</NotePart>
                        <NoteKeys>CTRL+T</NoteKeys>
                        <NotePart $x={25}>把中心的点移到大星星上</NotePart>
                        <NotePart $x={35}>角度设置为30度</NotePart>
                      </CanvasNote>
                      <Flag>
                        <StarArt />
                      </Flag>
                    </Canvas>
                    <DocScroll />
                  </DocArea>
                  <StatusBar>
                    <ZoomBox>120%</ZoomBox>
                    <DocInfo>
                      文档:1.14M/0 字节
                      <ChevronRight size={11} />
                    </DocInfo>
                  </StatusBar>
                </CenterColumn>

                <DockColumn $w={32} $ml={1}>
                  <DockGroup $h={60}>
                    <DockIcon>
                      <HistoryIcon />
                    </DockIcon>
                    <DockIcon>
                      <Play size={16} fill="#d6d6d6" />
                    </DockIcon>
                  </DockGroup>
                  <DockGroup $h={87}>
                    <DockIcon>
                      <DockLetter>A</DockLetter>
                    </DockIcon>
                    <DockIcon>
                      <Pilcrow size={15} strokeWidth={2.6} />
                    </DockIcon>
                    <DockIcon>
                      <Info size={17} strokeWidth={1.4} />
                    </DockIcon>
                  </DockGroup>
                  <DockGroup $h={36}>
                    <DockIcon>
                      <DockScript>A</DockScript>
                    </DockIcon>
                  </DockGroup>
                  <DockGroup $h={61}>
                    <DockIcon>
                      <PanelFormIcon />
                    </DockIcon>
                    <DockIcon>
                      <FileText size={15} fill="#d6d6d6" color="#505050" />
                    </DockIcon>
                  </DockGroup>
                  <DockGroup $h={36}>
                    <DockIcon>
                      <ToolsCrossIcon />
                    </DockIcon>
                  </DockGroup>
                  <DockGroup $h={37}>
                    <DockIcon>
                      <Box size={16} strokeWidth={1.3} />
                    </DockIcon>
                  </DockGroup>
                  <DockGroup $h={37}>
                    <DockIcon>
                      <RingGearIcon size={16} color="#8c8c8c" thick={2} />
                    </DockIcon>
                  </DockGroup>
                  <DockFill />
                </DockColumn>

                <DockColumn $w={33} $ml={3}>
                  <DockGroup $h={60}>
                    <DockIcon>
                      <BrushPresetIcon />
                    </DockIcon>
                    <DockIcon>
                      <SlidersHorizontal size={16} />
                    </DockIcon>
                  </DockGroup>
                  <DockFill />
                </DockColumn>

                <PanelColumn>
                  <Properties>
                    <PanelTop>▸▸</PanelTop>
                    <PanelTabs>
                      <PanelTab $w={39}>颜色</PanelTab>
                      <PanelTab $w={39}>色板</PanelTab>
                      <PanelTab $w={39} $active>属性</PanelTab>
                      <PanelTab $w={40}>调整</PanelTab>
                      <PanelTab $w={40}>样式</PanelTab>
                      <PanelTab $w={35} $pr={7}>库</PanelTab>
                      <PanelMenu>
                        <Menu size={13} />
                      </PanelMenu>
                    </PanelTabs>
                    <PanelBody>
                      <PanelInner>
                        <MaskRow>
                          <MaskIcon>
                            <MaskWhite />
                          </MaskIcon>
                          蒙版
                        </MaskRow>
                        <ShapeRow>
                          <ShapeThumb />
                          形状路径
                          <ShapeTools>
                            <Image size={15} />
                            <ShapeToolBox>
                              <BoxSelect size={13} />
                            </ShapeToolBox>
                          </ShapeTools>
                        </ShapeRow>
                        <SliderBlock $mt={13}>
                          <SliderHead>
                            浓度：
                            <ValueBox>100%</ValueBox>
                          </SliderHead>
                          <SliderTrack $at={100} />
                        </SliderBlock>
                        <SliderBlock $mt={25}>
                          <SliderHead>
                            羽化：
                            <ValueBox>0.0 像素</ValueBox>
                          </SliderHead>
                          <SliderTrack $at={0} />
                        </SliderBlock>
                        <AdjustRow>
                          调整：
                          <AdjustButtons>
                            <AdjustButton>选择并遮住 ...</AdjustButton>
                            <AdjustButton>颜色范围 ...</AdjustButton>
                            <AdjustButton>反相</AdjustButton>
                          </AdjustButtons>
                        </AdjustRow>
                        <ActionBar>
                          <ActionItem $dim>
                            <BoxSelect size={12} />
                          </ActionItem>
                          <ActionItem $dim>
                            <Layers2 size={13} />
                          </ActionItem>
                          <ActionItem $active>
                            <EyeIcon />
                          </ActionItem>
                          <ActionItem $dim>
                            <Trash2 size={13} />
                          </ActionItem>
                        </ActionBar>
                      </PanelInner>
                    </PanelBody>
                  </Properties>

                  <PanelGap />

                  <Layers>
                    <PanelTabs>
                      <PanelTab $w={39} $active>图层</PanelTab>
                      <PanelTab $w={40}>通道</PanelTab>
                      <PanelTab $w={39}>路径</PanelTab>
                      <PanelMenu>
                        <Menu size={13} />
                      </PanelMenu>
                    </PanelTabs>
                    <PanelBody>
                      <PanelInner>
                        <FilterRow $h={27}>
                          <FieldBox $w={78}>
                            <Search size={10} />
                            类型
                            <ChevronDown size={9} />
                          </FieldBox>
                          <FilterIcon $x={12}>
                            <Image size={13} />
                          </FilterIcon>
                          <FilterIcon $x={8}>
                            <Circle size={13} fill="#8a8a8a" />
                          </FilterIcon>
                          <FilterIcon $x={8}>
                            <Type size={13} strokeWidth={2.4} />
                          </FilterIcon>
                          <FilterIcon $x={8}>
                            <BoxSelect size={13} />
                          </FilterIcon>
                          <FilterIcon $x={9}>
                            <FileText size={13} />
                          </FilterIcon>
                          <FilterToggle />
                        </FilterRow>
                        <FilterRow $h={24}>
                          <FieldBox $w={105}>
                            正常
                            <ChevronDown size={9} />
                          </FieldBox>
                          <DimLabel $x={7}>不透明度:</DimLabel>
                          <FieldBox $w={50} $x={2}>
                            100%
                            <ChevronDown size={9} />
                          </FieldBox>
                        </FilterRow>
                        <FilterRow $h={25}>
                          <DimLabel $x={3}>锁定:</DimLabel>
                          <FilterIcon $x={7}>
                            <BoxSelect size={12} />
                          </FilterIcon>
                          <FilterIcon $x={8}>
                            <Brush size={12} />
                          </FilterIcon>
                          <FilterIcon $x={7}>
                            <Move size={12} />
                          </FilterIcon>
                          <FilterIcon $x={8}>
                            <Crop size={12} />
                          </FilterIcon>
                          <FilterIcon $x={8}>
                            <Lock size={12} />
                          </FilterIcon>
                          <DimLabel $x={8}>填充:</DimLabel>
                          <FieldBox $w={50} $x={2}>
                            100%
                            <ChevronDown size={9} />
                          </FieldBox>
                        </FilterRow>
                        <LayerRow $selected>
                          <EyeCell>
                            <EyeIcon size={15} />
                          </EyeCell>
                          <LayerThumb>
                            <ThumbBadge />
                          </LayerThumb>
                          多边形 1
                        </LayerRow>
                        <LayerRow>
                          <EyeCell>
                            <EyeIcon size={15} />
                          </EyeCell>
                          <LayerThumb $red />
                          背景
                          <LayerLock>
                            <Lock size={11} />
                          </LayerLock>
                        </LayerRow>
                        <LayersFooter>
                          <Link2 size={14} />
                          <DimLabel>fx</DimLabel>
                          <Image size={14} />
                          <Circle size={14} />
                          <Folder size={14} fill="#767676" />
                          <Plus size={14} />
                          <Trash2 size={14} />
                        </LayersFooter>
                      </PanelInner>
                    </PanelBody>
                  </Layers>
                </PanelColumn>
              </Workspace>
            </PsWindow>
            <BottomStrip>
              <StripWhite $w={305} $ml={42} />
              <StripGrey $w={43} $ml={356} />
              <ClippedClock $ml={862}>10:23</ClippedClock>
            </BottomStrip>
          </Photo>

          <SideColumn $right>
            <ChevronRight size={78} strokeWidth={0.65} />
          </SideColumn>
        </Stage>

        <BottomStrip>
          <StripWhite $w={344} $ml={48} />
          <StripGrey $w={47} $ml={549} />
          <ClippedClock $ml={829}>10:27</ClippedClock>
        </BottomStrip>

        <InkStrokes />

        <Activation $x={1554} $y={913} $alpha={0.22} $big={18} $small={13.5}>
          激活 Windows
          <small>转到“设置”以激活 Windows。</small>
        </Activation>
        <Activation $x={1632} $y={944} $alpha={0.38} $big={20} $small={15}>
          激活 Windows
          <small>转到“设置”以激活 Windows。</small>
        </Activation>

        <UploadBadge $x={1709} $y={28} $w={104} $h={25}>
          <UploadLogo $w={30}>
            <BaiduMark size={20} />
          </UploadLogo>
          <UploadText>拖拽上传</UploadText>
        </UploadBadge>
        <UploadBadge $x={1624} $y={105} $w={91} $h={22}>
          <UploadLogo $w={25}>
            <BaiduMark size={18} />
          </UploadLogo>
          <UploadText>拖拽上传</UploadText>
        </UploadBadge>

        <ImeBar>
          <ImeLogo>万</ImeLogo>
          <ImeItem>中</ImeItem>
          <ImeItem>
            <Moon size={14} fill="#3d95e8" strokeWidth={0} />
          </ImeItem>
          <ImeItem>
            <PunctuationIcon />
          </ImeItem>
          <ImeItem>
            <Keyboard size={15} />
          </ImeItem>
          <ImeItem>
            <User size={14} fill="#d8d8d8" color="#d8d8d8" />
          </ImeItem>
          <ImeItem>简</ImeItem>
          <ImeItem>
            <Shirt size={14} fill="#3d95e8" />
          </ImeItem>
          <ImeItem>
            <RingGearIcon size={15} color="#3d95e8" thick={3} />
          </ImeItem>
        </ImeBar>

        <UsbTile $x={1602} $y={182} $s={50}>
          <UsbIcon w={23} />
        </UsbTile>
        <UsbTile $x={1528} $y={241} $s={44}>
          <UsbIcon w={20} />
        </UsbTile>

        <BallClip $x={1793} $w={17}>
          <SpeedBall $y={10}>66</SpeedBall>
        </BallClip>
        <BallClip $x={1902} $w={18}>
          <SpeedBall $y={7}>68</SpeedBall>
        </BallClip>

        <ExpandButton>
          <Maximize2 size={22} strokeWidth={1.3} />
        </ExpandButton>
      </Page>
    </>
  );
}
